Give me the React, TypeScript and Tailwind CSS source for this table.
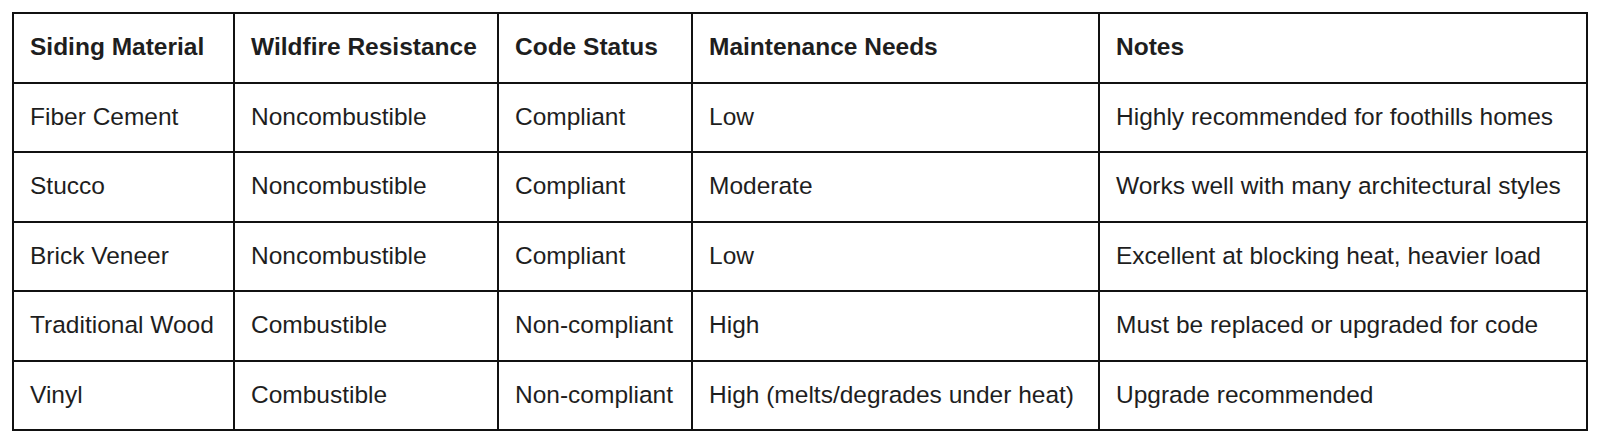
const headers = ["Siding Material", "Wildfire Resistance", "Code Status", "Maintenance Needs", "Notes"];

const rows = [
  ["Fiber Cement", "Noncombustible", "Compliant", "Low", "Highly recommended for foothills homes"],
  ["Stucco", "Noncombustible", "Compliant", "Moderate", "Works well with many architectural styles"],
  ["Brick Veneer", "Noncombustible", "Compliant", "Low", "Excellent at blocking heat, heavier load"],
  ["Traditional Wood", "Combustible", "Non-compliant", "High", "Must be replaced or upgraded for code"],
  ["Vinyl", "Combustible", "Non-compliant", "High (melts/degrades under heat)", "Upgrade recommended"],
];

export default function App() {
  return (
    <div className="min-h-[438px] w-[1600px] bg-white pl-3 pt-3 font-['Liberation_Sans',Arial,sans-serif] text-[24.5px] text-[#1e1e1e]">
      <table className="w-[1574px] table-fixed border-collapse border-2 border-[#333]">
        <colgroup>
          <col className="w-[221px]" />
          <col className="w-[264px]" />
          <col className="w-[194px]" />
          <col className="w-[407px]" />
          <col className="w-[488px]" />
        </colgroup>
        <thead>
          <tr className="h-[69.5px]">
            {headers.map((h) => (
              <th key={h} className="border-2 border-[#111] px-[16px] text-left font-bold whitespace-nowrap">
                {h}
              </th>
            ))}
          </tr>
        </thead>
        <tbody>
          {rows.map((row, i) => (
            <tr key={i} className="h-[69.5px]">
              {row.map((cell, j) => (
                <td key={j} className="border-2 border-[#111] px-[16px] whitespace-nowrap">
                  {cell}
                </td>
              ))}
            </tr>
          ))}
        </tbody>
      </table>
    </div>
  );
}
